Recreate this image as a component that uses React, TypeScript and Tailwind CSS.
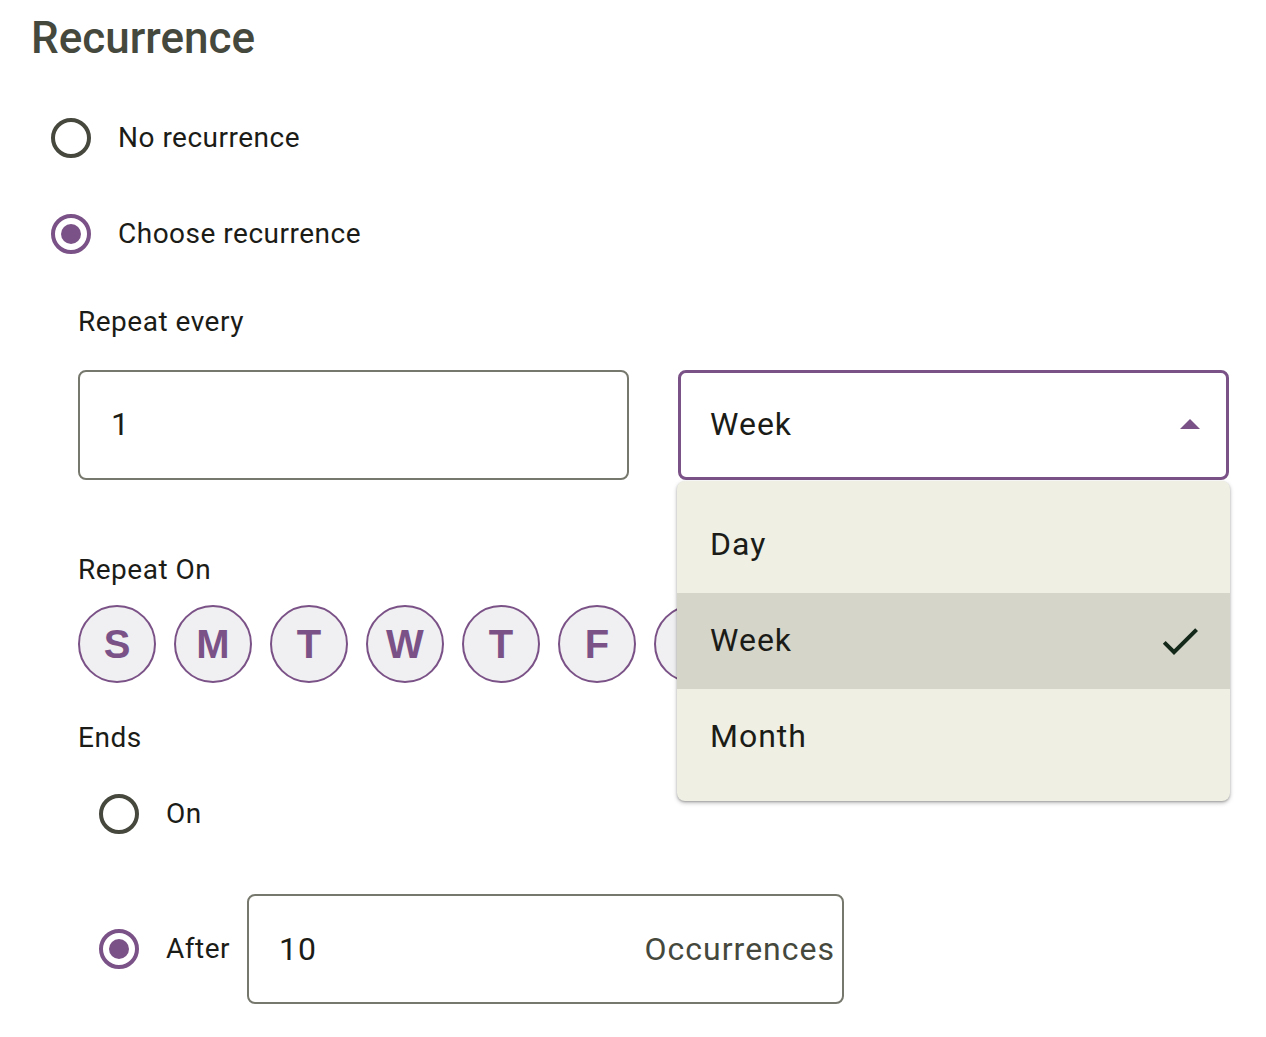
import React from "react";

const PURPLE = "#7b5287";

function Radio({ checked }: { checked?: boolean }) {
  return (
    <div className="flex h-[80px] w-[80px] shrink-0 items-center justify-center">
      <div
        className={
          checked
            ? "flex h-[40px] w-[40px] items-center justify-center rounded-full border-[4px] border-[#7b5287]"
            : "h-[40px] w-[40px] rounded-full border-[4px] border-[#46483e]"
        }
      >
        {checked && <div className="h-[20px] w-[20px] rounded-full bg-[#7b5287]" />}
      </div>
    </div>
  );
}

const days = ["S", "M", "T", "W", "T", "F", "S"];

export default function App() {
  return (
    <div className="min-h-[1037px] bg-white pl-[31px] font-['Roboto',sans-serif] text-[#1b1c17]">
      <h1 className="mt-[10px] h-[56px] text-[44px] font-medium leading-[56px] text-[#45483c]">
        Recurrence
      </h1>

      <div className="mt-[32px] flex flex-col gap-[16px]">
        <div className="flex items-center">
          <Radio />
          <span className="ml-[7px] text-[28px] leading-[40px] tracking-[0.5px]">No recurrence</span>
        </div>
        <div className="flex items-center">
          <Radio checked />
          <span className="ml-[7px] text-[28px] leading-[40px] tracking-[0.5px]">Choose recurrence</span>
        </div>
      </div>

      <div className="ml-[47px] w-[1151px]">
        <div className="mt-[28px] text-[28px] leading-[40px] tracking-[0.5px]">Repeat every</div>

        <div className="mt-[28px] grid grid-cols-2 gap-[49px]">
          <div className="flex h-[110px] items-center rounded-[8px] border-[2px] border-[#77786d] pb-[3px] pl-[31px] text-[32px] tracking-[1px]">
            1
          </div>
          <div className="relative z-10">
            <div className="flex h-[110px] items-center justify-between rounded-[8px] border-[3px] border-[#7b5287] pb-[3px] pl-[29px] pr-[12px] text-[32px] tracking-[1px]">
              <span>Week</span>
              <svg width="48" height="48" viewBox="0 0 24 24" className="mt-[3px]">
                <path d="M7 14l5-5 5 5z" fill={PURPLE} />
              </svg>
            </div>
            <div className="absolute left-[-1px] top-[111px] w-[553px] rounded-[8px] bg-[#efefe4] py-[16px] shadow-[0_2px_4px_rgba(0,0,0,0.25),0_1px_2px_rgba(0,0,0,0.2)]">
              <div className="flex h-[96px] items-center pb-[3px] pl-[33px] text-[32px] tracking-[1px]">Day</div>
              <div className="flex h-[96px] items-center justify-between bg-[#d5d5ca] pl-[33px] pr-[26px] text-[32px] tracking-[1px]">
                <span className="pb-[3px]">Week</span>
                <svg width="48" height="48" viewBox="0 0 24 24">
                  <path d="M9 16.17L4.83 12l-1.42 1.41L9 19 21 7l-1.41-1.41z" fill="#15291a" />
                </svg>
              </div>
              <div className="flex h-[96px] items-center pb-[3px] pl-[33px] text-[32px] tracking-[1px]">Month</div>
            </div>
          </div>
        </div>

        <div className="mt-[70px] text-[28px] leading-[40px] tracking-[0.5px]">Repeat On</div>
        <div className="mt-[15px] flex gap-[18px]">
          {days.map((d, i) => (
            <div
              key={i}
              className="flex h-[78px] w-[78px] items-center justify-center rounded-full border-[2px] border-[#7b5287] bg-[#f0eff1] font-['Liberation_Sans',Arial,sans-serif] text-[40px] font-bold text-[#7b5287]"
            >
              {d}
            </div>
          ))}
        </div>

        <div className="mt-[35px] text-[28px] leading-[40px] tracking-[0.5px]">Ends</div>
        <div className="ml-[1px] mt-[16px] flex items-center">
          <Radio />
          <span className="ml-[7px] text-[28px] leading-[40px] tracking-[0.5px]">On</span>
        </div>
        <div className="ml-[1px] mt-[40px] flex h-[110px] items-center">
          <Radio checked />
          <span className="ml-[7px] text-[28px] leading-[40px] tracking-[0.5px]">After</span>
          <div className="ml-[17px] flex h-[110px] w-[597px] items-center justify-between rounded-[8px] border-[2px] border-[#77786d] pl-[30px] pr-[7px] text-[32px] tracking-[1px]">
            <span>10</span>
            <span className="text-[#45483c]">Occurrences</span>
          </div>
        </div>
      </div>
    </div>
  );
}
